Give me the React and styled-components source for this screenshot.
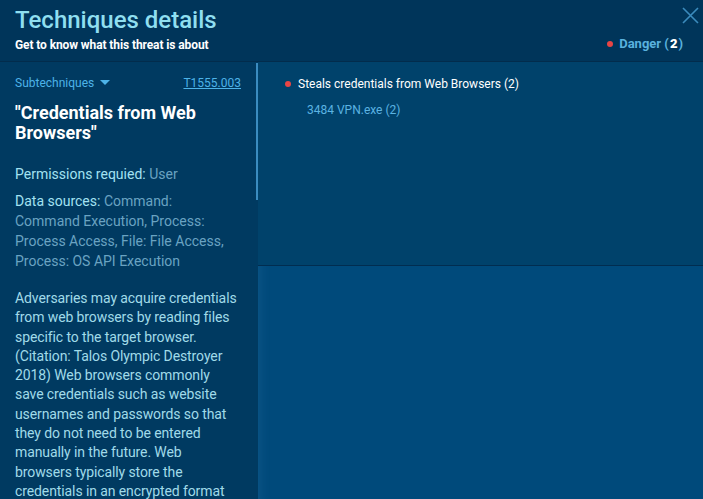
import React from 'react';
import styled, { createGlobalStyle } from 'styled-components';

const GlobalStyle = createGlobalStyle`
    html, body {
        margin: 0;
        padding: 0;
        width: 100%;
        height: 100%;
        overflow: hidden;
        background: #00355a;
        font-family: Roboto, "Liberation Sans", sans-serif;
    }
    #root {
        height: 100%;
    }
`;

const App = () => {
    return (
        <>
            <GlobalStyle />
            <Page>
                <Header>
                    <HeaderText>
                        <Title>Techniques details</Title>
                        <Subtitle>Get to know what this threat is about</Subtitle>
                    </HeaderText>
                    <HeaderSide>
                        <CloseButton aria-label="close">
                            <svg width="17" height="17" viewBox="0 0 17 17">
                                <path d="M1 1 L16 16 M16 1 L1 16" stroke="#3b8bbd" strokeWidth="1.6" fill="none" />
                            </svg>
                        </CloseButton>
                        <Danger>
                            <Dot />
                            Danger (<strong>2</strong>)
                        </Danger>
                    </HeaderSide>
                </Header>
                <Body>
                    <Sidebar>
                        <SideTop>
                            <Subtech>
                                Subtechniques
                                <svg width="10" height="6" viewBox="0 0 10 6">
                                    <path d="M0 0 L10 0 L5 5 Z" fill="#4db3e8" />
                                </svg>
                            </Subtech>
                            <TechId href="#">T1555.003</TechId>
                        </SideTop>
                        <TechName>"Credentials from Web Browsers"</TechName>
                        <Meta>
                            <MetaLabel>Permissions requied:</MetaLabel> <MetaValue>User</MetaValue>
                        </Meta>
                        <Meta>
                            <MetaLabel>Data sources:</MetaLabel> <MetaValue>Command: Command Execution, Process: Process Access, File: File Access, Process: OS API Execution</MetaValue>
                        </Meta>
                        <Description>
                            Adversaries may acquire credentials from web browsers by reading files specific to the target browser. (Citation: Talos Olympic Destroyer 2018) Web browsers commonly save credentials such as website usernames and passwords so that they do not need to be entered manually in the future. Web browsers typically store the credentials in an encrypted format within a credential store; however, methods exist to extract plaintext credentials from web browsers.
                        </Description>
                        <Scrollbar />
                    </Sidebar>
                    <Main>
                        <Findings>
                            <Finding>
                                <Dot />
                                Steals credentials from Web Browsers (2)
                            </Finding>
                            <Process>3484 VPN.exe (2)</Process>
                        </Findings>
                        <Empty />
                    </Main>
                </Body>
            </Page>
        </>
    );
};

const Page = styled.div`
    display: flex;
    flex-direction: column;
    height: 100%;
    background: #00355a;
`;

const Header = styled.div`
    display: flex;
    justify-content: space-between;
    height: 62px;
    padding: 6px 4px 0 15px;
    box-sizing: border-box;
    border-bottom: 1px solid #022c4c;
`;

const HeaderText = styled.div`
    display: flex;
    flex-direction: column;
`;

const Title = styled.h1`
    margin: 0;
    font-size: 24px;
    font-weight: 500;
    line-height: 28px;
    color: #8fdff0;
`;

const Subtitle = styled.p`
    margin: 4px 0 0;
    font-size: 12px;
    font-weight: 700;
    color: #ffffff;
    letter-spacing: -0.1px;
`;

const HeaderSide = styled.div`
    display: flex;
    flex-direction: column;
    align-items: flex-end;
`;

const CloseButton = styled.button`
    background: none;
    border: none;
    padding: 0;
    margin: 1px 0 0;
    width: 17px;
    height: 17px;
    cursor: pointer;
    display: flex;
`;

const Danger = styled.div`
    display: flex;
    align-items: center;
    gap: 6px;
    margin: 12px 16px 0 0;
    font-size: 13px;
    font-weight: 700;
    color: #59b1de;
    strong {
        color: #ffffff;
        margin: 0 -5px;
    }
`;

const Dot = styled.span`
    display: inline-block;
    width: 6px;
    height: 6px;
    border-radius: 50%;
    background: #e84545;
    flex-shrink: 0;
`;

const Body = styled.div`
    flex: 1;
    display: flex;
    min-height: 0;
`;

const Sidebar = styled.div`
    position: relative;
    width: 258px;
    flex-shrink: 0;
    background: #003a61;
    padding: 13px 20px 0 15px;
    box-sizing: border-box;
    overflow: hidden;
`;

const Scrollbar = styled.div`
    position: absolute;
    top: 1px;
    right: 0;
    width: 2px;
    height: 137px;
    background: #3b8cc0;
`;

const SideTop = styled.div`
    display: flex;
    justify-content: space-between;
    align-items: center;
    margin-right: -3px;
    font-size: 12px;
    line-height: 16px;
`;

const Subtech = styled.div`
    display: flex;
    align-items: center;
    gap: 6px;
    color: #4db3e8;
`;

const TechId = styled.a`
    color: #4db3e8;
    text-decoration: underline;
`;

const TechName = styled.h2`
    margin: 12px 0 21px;
    font-size: 18px;
    font-weight: 700;
    line-height: 20px;
    color: #ffffff;
`;

const Meta = styled.p`
    margin: 0 0 7px;
    font-size: 14px;
    line-height: 20px;
`;

const MetaLabel = styled.span`
    color: #a3e2f2;
`;

const MetaValue = styled.span`
    color: #6aa3c2;
`;

const Description = styled.p`
    margin: 18px 0 0;
    font-size: 14px;
    line-height: 19.3px;
    letter-spacing: -0.1px;
    color: #a0dbe9;
`;

const Main = styled.div`
    flex: 1;
    display: flex;
    flex-direction: column;
    background: #004a7b;
    box-shadow: inset 10px 0 8px -6px rgba(80, 150, 200, 0.12);
`;

const Findings = styled.div`
    height: 204px;
    background: #00426b;
    border-bottom: 1px solid #012d50;
    padding: 14px 0 0 27px;
    box-sizing: border-box;
`;

const Finding = styled.div`
    display: flex;
    align-items: center;
    gap: 7px;
    font-size: 12px;
    line-height: 16px;
    color: #ffffff;
`;

const Process = styled.div`
    margin: 10px 0 0 22px;
    font-size: 12px;
    line-height: 16px;
    color: #5bb3e2;
`;

const Empty = styled.div`
    flex: 1;
`;

export default App;
